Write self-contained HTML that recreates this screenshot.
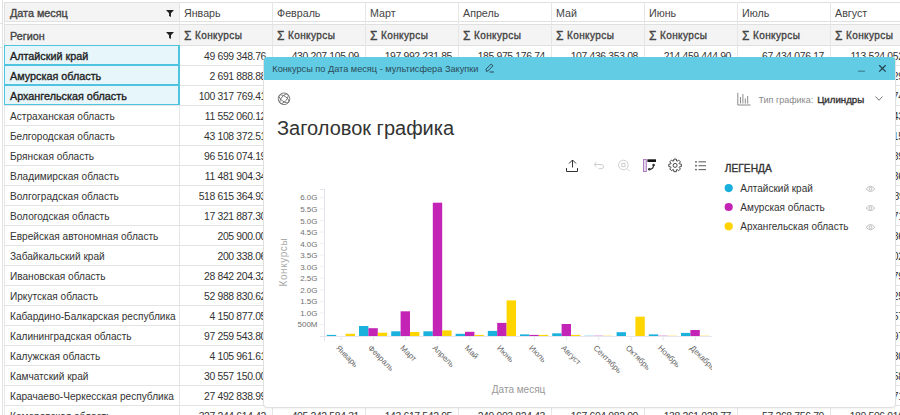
<!DOCTYPE html>
<html><head><meta charset="utf-8">
<style>
*{box-sizing:border-box;margin:0;padding:0}
html,body{width:900px;height:415px;overflow:hidden;background:#fff;position:relative;font-family:"Liberation Sans",sans-serif;font-size:10px;color:#333}
.abs{position:absolute}
.hdr{position:absolute;border:1px solid #e0e0e0;background:#fff}
.hdr.gray{background:#f4f4f4}
.hdr.nb{border-left:none;border-right:none}
.hdr.nb span{left:6px;font-size:10.7px}
.hdr.nb span.b{font-size:10px}
.hdr span{position:absolute;top:3px;white-space:nowrap;color:#444}
.b{font-weight:normal;font-size:10.8px;-webkit-text-stroke:0.35px currentColor}
.sig{font-weight:normal;font-size:12px;position:relative;top:0.5px}
.flt{position:absolute;left:161px;top:7px;width:8px;height:7px;background:#222;clip-path:polygon(0 0,100% 0,62% 45%,62% 100%,38% 85%,38% 45%)}
.row{position:absolute;left:4px;width:900px;height:20px;border-bottom:1px solid #e3e3e3}
.txt,.num{position:absolute;white-space:nowrap;color:#333;font-size:10.1px}
.num{letter-spacing:-0.35px;font-size:10.4px}
.vl{top:2px;width:1px;height:415px;background:#e6e6e6}
.sel{position:absolute;left:4px;width:176px;border:1px solid #4fc3df;border-right-width:2px;background:#e7f6fb}
.sel span{position:absolute;white-space:nowrap;color:#222}
/* modal */
.modal{position:absolute;left:263px;top:57px;width:633px;height:351px;background:#fff;border:1px solid #e0e0e0;border-radius:4px;box-shadow:0 1px 2px rgba(0,0,0,.05)}
.tbar{position:absolute;left:264px;top:57px;width:631px;height:23px;background:#62cce4;border-radius:3px 3px 0 0}
</style></head><body>
<div class="abs" style="left:2px;top:0;width:1px;height:415px;background:#e2e2e2"></div>
<div class="abs" style="left:4px;top:2px;width:1px;height:415px;background:#e8e8e8"></div>
<div class="abs" style="left:0;top:23px;width:3px;height:1px;background:#e2e2e2"></div>
<div class="abs" style="left:0;top:47px;width:3px;height:1px;background:#e2e2e2"></div>
<div class="hdr gray" style="left:4px;top:2px;width:176px;height:20px"><span class="b" style="left:5px;top:4px">Дата месяц</span><i class="flt"></i></div>
<div class="hdr gray" style="left:4px;top:24px;width:176px;height:22px"><span class="b" style="left:5px;top:5px">Регион</span><i class="flt" style="top:7px"></i></div>
<div class="hdr nb" style="left:179.00px;top:2px;width:93.00px;height:20px"><span style="left:5px;top:4px">Январь</span></div>
<div class="hdr gray nb" style="left:179.00px;top:24px;width:93.00px;height:22px"><span class="b" style="left:5px;top:3px;letter-spacing:0.4px"><b class="sig">&Sigma;</b> Конкурсы</span></div>
<div class="hdr nb" style="left:272.00px;top:2px;width:93.00px;height:20px"><span style="left:5px;top:4px">Февраль</span></div>
<div class="hdr gray nb" style="left:272.00px;top:24px;width:93.00px;height:22px"><span class="b" style="left:5px;top:3px;letter-spacing:0.4px"><b class="sig">&Sigma;</b> Конкурсы</span></div>
<div class="hdr nb" style="left:365.00px;top:2px;width:93.00px;height:20px"><span style="left:5px;top:4px">Март</span></div>
<div class="hdr gray nb" style="left:365.00px;top:24px;width:93.00px;height:22px"><span class="b" style="left:5px;top:3px;letter-spacing:0.4px"><b class="sig">&Sigma;</b> Конкурсы</span></div>
<div class="hdr nb" style="left:458.00px;top:2px;width:93.00px;height:20px"><span style="left:5px;top:4px">Апрель</span></div>
<div class="hdr gray nb" style="left:458.00px;top:24px;width:93.00px;height:22px"><span class="b" style="left:5px;top:3px;letter-spacing:0.4px"><b class="sig">&Sigma;</b> Конкурсы</span></div>
<div class="hdr nb" style="left:551.00px;top:2px;width:93.00px;height:20px"><span style="left:5px;top:4px">Май</span></div>
<div class="hdr gray nb" style="left:551.00px;top:24px;width:93.00px;height:22px"><span class="b" style="left:5px;top:3px;letter-spacing:0.4px"><b class="sig">&Sigma;</b> Конкурсы</span></div>
<div class="hdr nb" style="left:644.00px;top:2px;width:93.00px;height:20px"><span style="left:5px;top:4px">Июнь</span></div>
<div class="hdr gray nb" style="left:644.00px;top:24px;width:93.00px;height:22px"><span class="b" style="left:5px;top:3px;letter-spacing:0.4px"><b class="sig">&Sigma;</b> Конкурсы</span></div>
<div class="hdr nb" style="left:737.00px;top:2px;width:93.00px;height:20px"><span style="left:5px;top:4px">Июль</span></div>
<div class="hdr gray nb" style="left:737.00px;top:24px;width:93.00px;height:22px"><span class="b" style="left:5px;top:3px;letter-spacing:0.4px"><b class="sig">&Sigma;</b> Конкурсы</span></div>
<div class="hdr nb" style="left:830.00px;top:2px;width:93.00px;height:20px"><span style="left:5px;top:4px">Август</span></div>
<div class="hdr gray nb" style="left:830.00px;top:24px;width:93.00px;height:22px"><span class="b" style="left:5px;top:3px;letter-spacing:0.4px"><b class="sig">&Sigma;</b> Конкурсы</span></div>
<div class="hdr nb" style="left:923.00px;top:2px;width:93.00px;height:20px"><span style="left:5px;top:4px">Сентябрь</span></div>
<div class="hdr gray nb" style="left:923.00px;top:24px;width:93.00px;height:22px"><span class="b" style="left:5px;top:3px;letter-spacing:0.4px"><b class="sig">&Sigma;</b> Конкурсы</span></div>
<div class="row" style="top:46px"></div>
<span class="txt" style="left:10px;top:51px">Алтайский край</span>
<span class="num" style="right:634.00px;top:51px">49 699 348.76</span>
<span class="num" style="right:541.00px;top:51px">430 207 105.09</span>
<span class="num" style="right:448.00px;top:51px">197 992 231.85</span>
<span class="num" style="right:355.00px;top:51px">185 975 176.74</span>
<span class="num" style="right:262.00px;top:51px">107 436 353.08</span>
<span class="num" style="right:169.00px;top:51px">214 459 444.90</span>
<span class="num" style="right:76.00px;top:51px">67 434 076.17</span>
<span class="num" style="right:-17.00px;top:51px">113 524 052.37</span>
<span class="num" style="right:-110.00px;top:51px">96 210 438.15</span>
<div class="row" style="top:66px"></div>
<span class="txt" style="left:10px;top:71px">Амурская область</span>
<span class="num" style="right:634.00px;top:71px">2 691 888.88</span>
<span class="num" style="right:541.00px;top:71px">72 151 423.50</span>
<span class="num" style="right:448.00px;top:71px">163 724 538.36</span>
<span class="num" style="right:355.00px;top:71px">111 616 594.80</span>
<span class="num" style="right:262.00px;top:71px">181 572 091.54</span>
<span class="num" style="right:169.00px;top:71px">188 090 370.93</span>
<span class="num" style="right:76.00px;top:71px">20 593 128.91</span>
<span class="num" style="right:-17.00px;top:71px">4 937 229.47</span>
<span class="num" style="right:-110.00px;top:71px">251 403 255.55</span>
<div class="row" style="top:86px"></div>
<span class="txt" style="left:10px;top:91px">Архангельская область</span>
<span class="num" style="right:634.00px;top:91px">100 317 769.41</span>
<span class="num" style="right:541.00px;top:91px">78 546 850.28</span>
<span class="num" style="right:448.00px;top:91px">71 064 957.35</span>
<span class="num" style="right:355.00px;top:91px">298 697 805.82</span>
<span class="num" style="right:262.00px;top:91px">141 608 788.75</span>
<span class="num" style="right:169.00px;top:91px">251 101 973.93</span>
<span class="num" style="right:76.00px;top:91px">143 429 609.40</span>
<span class="num" style="right:-17.00px;top:91px">192 081 374.02</span>
<span class="num" style="right:-110.00px;top:91px">46 034 310.78</span>
<div class="row" style="top:106px"></div>
<span class="txt" style="left:10px;top:111px">Астраханская область</span>
<span class="num" style="right:634.00px;top:111px">11 552 060.12</span>
<span class="num" style="right:541.00px;top:111px">190 823 336.83</span>
<span class="num" style="right:448.00px;top:111px">260 545 546.84</span>
<span class="num" style="right:355.00px;top:111px">157 431 181.90</span>
<span class="num" style="right:262.00px;top:111px">222 634 305.00</span>
<span class="num" style="right:169.00px;top:111px">201 752 031.14</span>
<span class="num" style="right:76.00px;top:111px">20 145 400.03</span>
<span class="num" style="right:-17.00px;top:111px">227 710 843.64</span>
<span class="num" style="right:-110.00px;top:111px">177 738 775.30</span>
<div class="row" style="top:126px"></div>
<span class="txt" style="left:10px;top:131px">Белгородская область</span>
<span class="num" style="right:634.00px;top:131px">43 108 372.51</span>
<span class="num" style="right:541.00px;top:131px">91 079 030.20</span>
<span class="num" style="right:448.00px;top:131px">10 272 513.69</span>
<span class="num" style="right:355.00px;top:131px">259 792 643.86</span>
<span class="num" style="right:262.00px;top:131px">142 351 977.51</span>
<span class="num" style="right:169.00px;top:131px">215 928 353.30</span>
<span class="num" style="right:76.00px;top:131px">263 765 027.28</span>
<span class="num" style="right:-17.00px;top:131px">214 524 715.60</span>
<span class="num" style="right:-110.00px;top:131px">276 408 501.61</span>
<div class="row" style="top:146px"></div>
<span class="txt" style="left:10px;top:151px">Брянская область</span>
<span class="num" style="right:634.00px;top:151px">96 516 074.19</span>
<span class="num" style="right:541.00px;top:151px">119 094 057.80</span>
<span class="num" style="right:448.00px;top:151px">240 471 722.52</span>
<span class="num" style="right:355.00px;top:151px">133 941 695.76</span>
<span class="num" style="right:262.00px;top:151px">280 740 429.79</span>
<span class="num" style="right:169.00px;top:151px">263 781 131.44</span>
<span class="num" style="right:76.00px;top:151px">30 138 838.61</span>
<span class="num" style="right:-17.00px;top:151px">41 654 689.20</span>
<span class="num" style="right:-110.00px;top:151px">65 879 095.43</span>
<div class="row" style="top:166px"></div>
<span class="txt" style="left:10px;top:171px">Владимирская область</span>
<span class="num" style="right:634.00px;top:171px">11 481 904.34</span>
<span class="num" style="right:541.00px;top:171px">289 678 561.53</span>
<span class="num" style="right:448.00px;top:171px">131 412 398.12</span>
<span class="num" style="right:355.00px;top:171px">188 367 838.97</span>
<span class="num" style="right:262.00px;top:171px">91 006 833.33</span>
<span class="num" style="right:169.00px;top:171px">152 665 652.16</span>
<span class="num" style="right:76.00px;top:171px">116 374 011.39</span>
<span class="num" style="right:-17.00px;top:171px">105 922 236.14</span>
<span class="num" style="right:-110.00px;top:171px">175 937 158.11</span>
<div class="row" style="top:186px"></div>
<span class="txt" style="left:10px;top:191px">Волгоградская область</span>
<span class="num" style="right:634.00px;top:191px">518 615 364.93</span>
<span class="num" style="right:541.00px;top:191px">175 691 286.10</span>
<span class="num" style="right:448.00px;top:191px">271 356 329.48</span>
<span class="num" style="right:355.00px;top:191px">204 912 658.85</span>
<span class="num" style="right:262.00px;top:191px">278 754 734.76</span>
<span class="num" style="right:169.00px;top:191px">257 063 769.35</span>
<span class="num" style="right:76.00px;top:191px">297 305 903.82</span>
<span class="num" style="right:-17.00px;top:191px">201 710 789.11</span>
<span class="num" style="right:-110.00px;top:191px">49 766 786.97</span>
<div class="row" style="top:206px"></div>
<span class="txt" style="left:10px;top:211px">Вологодская область</span>
<span class="num" style="right:634.00px;top:211px">17 321 887.30</span>
<span class="num" style="right:541.00px;top:211px">258 330 622.40</span>
<span class="num" style="right:448.00px;top:211px">289 425 251.25</span>
<span class="num" style="right:355.00px;top:211px">271 504 099.37</span>
<span class="num" style="right:262.00px;top:211px">171 163 143.54</span>
<span class="num" style="right:169.00px;top:211px">214 431 289.03</span>
<span class="num" style="right:76.00px;top:211px">64 126 370.12</span>
<span class="num" style="right:-17.00px;top:211px">249 650 771.15</span>
<span class="num" style="right:-110.00px;top:211px">172 486 173.35</span>
<div class="row" style="top:226px"></div>
<span class="txt" style="left:10px;top:231px">Еврейская автономная область</span>
<span class="num" style="right:634.00px;top:231px">205 900.00</span>
<span class="num" style="right:541.00px;top:231px">86 202 281.13</span>
<span class="num" style="right:448.00px;top:231px">19 974 712.57</span>
<span class="num" style="right:355.00px;top:231px">256 328 804.04</span>
<span class="num" style="right:262.00px;top:231px">296 951 998.46</span>
<span class="num" style="right:169.00px;top:231px">27 466 909.84</span>
<span class="num" style="right:76.00px;top:231px">240 378 001.06</span>
<span class="num" style="right:-17.00px;top:231px">123 728 086.38</span>
<span class="num" style="right:-110.00px;top:231px">46 078 846.96</span>
<div class="row" style="top:246px"></div>
<span class="txt" style="left:10px;top:251px">Забайкальский край</span>
<span class="num" style="right:634.00px;top:251px">200 338.06</span>
<span class="num" style="right:541.00px;top:251px">88 873 482.80</span>
<span class="num" style="right:448.00px;top:251px">230 868 774.30</span>
<span class="num" style="right:355.00px;top:251px">261 957 340.36</span>
<span class="num" style="right:262.00px;top:251px">14 212 828.28</span>
<span class="num" style="right:169.00px;top:251px">184 745 226.03</span>
<span class="num" style="right:76.00px;top:251px">14 437 132.81</span>
<span class="num" style="right:-17.00px;top:251px">215 813 702.76</span>
<span class="num" style="right:-110.00px;top:251px">99 955 289.66</span>
<div class="row" style="top:266px"></div>
<span class="txt" style="left:10px;top:271px">Ивановская область</span>
<span class="num" style="right:634.00px;top:271px">28 842 204.32</span>
<span class="num" style="right:541.00px;top:271px">264 390 686.87</span>
<span class="num" style="right:448.00px;top:271px">294 210 091.30</span>
<span class="num" style="right:355.00px;top:271px">152 120 691.72</span>
<span class="num" style="right:262.00px;top:271px">299 554 174.67</span>
<span class="num" style="right:169.00px;top:271px">93 591 345.99</span>
<span class="num" style="right:76.00px;top:271px">24 014 240.71</span>
<span class="num" style="right:-17.00px;top:271px">180 329 079.83</span>
<span class="num" style="right:-110.00px;top:271px">10 381 950.89</span>
<div class="row" style="top:286px"></div>
<span class="txt" style="left:10px;top:291px">Иркутская область</span>
<span class="num" style="right:634.00px;top:291px">52 988 830.62</span>
<span class="num" style="right:541.00px;top:291px">60 018 072.07</span>
<span class="num" style="right:448.00px;top:291px">122 972 904.55</span>
<span class="num" style="right:355.00px;top:291px">183 529 669.77</span>
<span class="num" style="right:262.00px;top:291px">47 703 498.31</span>
<span class="num" style="right:169.00px;top:291px">13 688 311.59</span>
<span class="num" style="right:76.00px;top:291px">260 465 931.14</span>
<span class="num" style="right:-17.00px;top:291px">94 835 325.45</span>
<span class="num" style="right:-110.00px;top:291px">287 639 168.50</span>
<div class="row" style="top:306px"></div>
<span class="txt" style="left:10px;top:311px">Кабардино-Балкарская республика</span>
<span class="num" style="right:634.00px;top:311px">4 150 877.05</span>
<span class="num" style="right:541.00px;top:311px">269 101 232.79</span>
<span class="num" style="right:448.00px;top:311px">113 958 982.58</span>
<span class="num" style="right:355.00px;top:311px">138 662 480.22</span>
<span class="num" style="right:262.00px;top:311px">156 501 822.39</span>
<span class="num" style="right:169.00px;top:311px">193 522 726.80</span>
<span class="num" style="right:76.00px;top:311px">179 099 421.28</span>
<span class="num" style="right:-17.00px;top:311px">168 219 057.54</span>
<span class="num" style="right:-110.00px;top:311px">186 417 714.50</span>
<div class="row" style="top:326px"></div>
<span class="txt" style="left:10px;top:331px">Калининградская область</span>
<span class="num" style="right:634.00px;top:331px">97 259 543.80</span>
<span class="num" style="right:541.00px;top:331px">282 245 755.37</span>
<span class="num" style="right:448.00px;top:331px">152 601 017.97</span>
<span class="num" style="right:355.00px;top:331px">129 926 274.48</span>
<span class="num" style="right:262.00px;top:331px">216 373 064.39</span>
<span class="num" style="right:169.00px;top:331px">72 053 050.22</span>
<span class="num" style="right:76.00px;top:331px">91 024 971.49</span>
<span class="num" style="right:-17.00px;top:331px">293 361 397.62</span>
<span class="num" style="right:-110.00px;top:331px">156 817 060.69</span>
<div class="row" style="top:346px"></div>
<span class="txt" style="left:10px;top:351px">Калужская область</span>
<span class="num" style="right:634.00px;top:351px">4 105 961.61</span>
<span class="num" style="right:541.00px;top:351px">164 980 709.84</span>
<span class="num" style="right:448.00px;top:351px">4 425 788.42</span>
<span class="num" style="right:355.00px;top:351px">125 147 892.80</span>
<span class="num" style="right:262.00px;top:351px">174 409 598.93</span>
<span class="num" style="right:169.00px;top:351px">6 995 814.20</span>
<span class="num" style="right:76.00px;top:351px">185 123 584.45</span>
<span class="num" style="right:-17.00px;top:351px">190 021 980.05</span>
<span class="num" style="right:-110.00px;top:351px">18 964 072.68</span>
<div class="row" style="top:366px"></div>
<span class="txt" style="left:10px;top:371px">Камчатский край</span>
<span class="num" style="right:634.00px;top:371px">30 557 150.00</span>
<span class="num" style="right:541.00px;top:371px">188 574 991.59</span>
<span class="num" style="right:448.00px;top:371px">140 408 878.48</span>
<span class="num" style="right:355.00px;top:371px">204 105 138.01</span>
<span class="num" style="right:262.00px;top:371px">106 420 517.93</span>
<span class="num" style="right:169.00px;top:371px">212 378 124.56</span>
<span class="num" style="right:76.00px;top:371px">221 672 252.49</span>
<span class="num" style="right:-17.00px;top:371px">7 632 558.23</span>
<span class="num" style="right:-110.00px;top:371px">19 112 464.29</span>
<div class="row" style="top:386px"></div>
<span class="txt" style="left:10px;top:391px">Карачаево-Черкесская республика</span>
<span class="num" style="right:634.00px;top:391px">27 492 838.99</span>
<span class="num" style="right:541.00px;top:391px">203 130 072.54</span>
<span class="num" style="right:448.00px;top:391px">289 028 368.54</span>
<span class="num" style="right:355.00px;top:391px">76 085 561.18</span>
<span class="num" style="right:262.00px;top:391px">137 437 326.76</span>
<span class="num" style="right:169.00px;top:391px">178 208 890.82</span>
<span class="num" style="right:76.00px;top:391px">96 687 590.34</span>
<span class="num" style="right:-17.00px;top:391px">109 822 571.71</span>
<span class="num" style="right:-110.00px;top:391px">94 488 527.70</span>
<div class="row" style="top:406px"></div>
<span class="txt" style="left:10px;top:411px">Кемеровская область</span>
<span class="num" style="right:634.00px;top:411px">327 244 614.42</span>
<span class="num" style="right:541.00px;top:411px">405 242 584.31</span>
<span class="num" style="right:448.00px;top:411px">143 617 542.95</span>
<span class="num" style="right:355.00px;top:411px">249 903 824.43</span>
<span class="num" style="right:262.00px;top:411px">167 604 082.00</span>
<span class="num" style="right:169.00px;top:411px">138 261 028.77</span>
<span class="num" style="right:76.00px;top:411px">57 268 756.70</span>
<span class="num" style="right:-17.00px;top:411px">180 506 016.52</span>
<span class="num" style="right:-110.00px;top:411px">90 418 331.20</span>
<div class="abs vl" style="left:179.00px"></div>
<div class="abs vl" style="left:272.00px"></div>
<div class="abs vl" style="left:365.00px"></div>
<div class="abs vl" style="left:458.00px"></div>
<div class="abs vl" style="left:551.00px"></div>
<div class="abs vl" style="left:644.00px"></div>
<div class="abs vl" style="left:737.00px"></div>
<div class="abs vl" style="left:830.00px"></div>
<div class="abs vl" style="left:923.00px"></div>
<div class="abs vl" style="left:1016.00px"></div>
<div class="sel" style="top:45px;height:20px"><span class="b" style="left:5px;top:4px">Алтайский край</span></div>
<div class="sel" style="top:65px;height:20px"><span class="b" style="left:5px;top:4px">Амурская область</span></div>
<div class="sel" style="top:85px;height:20px"><span class="b" style="left:5px;top:4px">Архангельская область</span></div>
<div class="modal"></div>
<div class="tbar"></div>
<svg class="abs" style="left:0;top:0" width="900" height="415" viewBox="0 0 900 415" font-family="Liberation Sans, sans-serif">
<!-- title bar -->
<text x="272.3" y="72.4" font-size="9.2" fill="#2b4a57">Конкурсы по Дата месяц - мультисфера Закупки</text>
<g fill="none" stroke="#2b4a57" stroke-width="1">
<path d="M486.5,71.5 L486,69.2 L491.2,64 L493,65.8 L487.8,71 Z"/>
<line x1="489.5" y1="72" x2="494" y2="72"/>
</g>
<line x1="858" y1="71.2" x2="865" y2="71.2" stroke="#3f8496" stroke-width="1.2"/>
<g stroke="#24414c" stroke-width="1.25"><line x1="879.2" y1="65.2" x2="885.6" y2="71.6"/><line x1="885.6" y1="65.2" x2="879.2" y2="71.6"/></g>
<!-- globe -->
<g fill="none" stroke="#707070" stroke-width="0.9">
<circle cx="284" cy="98.8" r="5.8"/>
<ellipse cx="284" cy="98.8" rx="5.8" ry="2.6" transform="rotate(-50 284 98.8)"/>
<ellipse cx="284" cy="98.8" rx="5.8" ry="2.6" transform="rotate(35 284 98.8)"/>
</g>
<text x="277" y="135" font-size="20" fill="#333">Заголовок графика</text>
<!-- chart type -->
<g fill="none" stroke="#8a8a8a" stroke-width="1">
<path d="M737.8,92.8 V105 H750.5"/>
<line x1="740.5" y1="97" x2="740.5" y2="103.5"/><line x1="742.9" y1="94" x2="742.9" y2="103.5"/><line x1="745.3" y1="98.5" x2="745.3" y2="103.5"/><line x1="747.7" y1="96" x2="747.7" y2="103.5"/>
</g>
<text x="758.4" y="102.9" font-size="9" fill="#8a8a8a">Тип графика:</text>
<text x="817.2" y="102.9" font-size="9.4" fill="#333" stroke="#333" stroke-width="0.35" textLength="47" lengthAdjust="spacingAndGlyphs">Цилиндры</text>
<polyline points="875.5,96.5 879,100.3 882.5,96.5" fill="none" stroke="#777" stroke-width="1"/>
<!-- toolbar -->
<g fill="none" stroke="#333" stroke-width="1">
<line x1="572.5" y1="160" x2="572.5" y2="167.5"/><polyline points="569,163.5 572.5,160 576,163.5"/>
<polyline points="566.5,168 566.5,171.5 577.5,171.5 577.5,168"/>
</g>
<g fill="none" stroke="#cfcfcf" stroke-width="1">
<path d="M594,164.5 H601 A2.7,2.1 0 0 1 601,168.7 H598.5"/><polyline points="596.6,162 594,164.5 596.6,167"/>
<circle cx="623.4" cy="165" r="4.8"/><rect x="621.8" y="163.4" width="3.2" height="3.2"/><line x1="626.8" y1="168.4" x2="629.6" y2="171.2"/>
</g>
<rect x="643.5" y="159.5" width="2.8" height="12" fill="#eadcf0" stroke="#b07cc0" stroke-width="1"/>
<rect x="647.4" y="159.3" width="8.6" height="2.7" fill="#151515"/>
<path d="M649.3,169.3 Q653.6,169.3 653.6,165" fill="none" stroke="#333" stroke-width="1.2"/>
<circle cx="649.3" cy="169.3" r="1.3" fill="#333"/><circle cx="653.6" cy="165" r="1.3" fill="#333"/>
<g fill="none" stroke="#444" stroke-width="1">
<path id="gear" stroke-linejoin="round" d="M673.64,161.04 L673.88,159.12 L676.32,159.12 L676.56,161.04 L677.15,161.28 L678.68,160.09 L680.41,161.82 L679.22,163.35 L679.46,163.94 L681.38,164.18 L681.38,166.62 L679.46,166.86 L679.22,167.45 L680.41,168.98 L678.68,170.71 L677.15,169.52 L676.56,169.76 L676.32,171.68 L673.88,171.68 L673.64,169.76 L673.05,169.52 L671.52,170.71 L669.79,168.98 L670.98,167.45 L670.74,166.86 L668.82,166.62 L668.82,164.18 L670.74,163.94 L670.98,163.35 L669.79,161.82 L671.52,160.09 L673.05,161.28 Z"/>
<circle cx="675.1" cy="165.4" r="2"/>
</g>
<g stroke="#666" stroke-width="1.1"><line x1="698.5" y1="161.8" x2="706" y2="161.8"/><line x1="698.5" y1="165.7" x2="706" y2="165.7"/><line x1="698.5" y1="169.6" x2="706" y2="169.6"/></g>
<g fill="#555"><circle cx="696" cy="161.8" r="0.9"/><circle cx="696" cy="165.7" r="0.9"/><circle cx="696" cy="169.6" r="0.9"/></g>
<!-- legend -->
<text x="724.8" y="172.3" font-size="10.4" fill="#333" stroke="#333" stroke-width="0.35" textLength="47" lengthAdjust="spacingAndGlyphs">ЛЕГЕНДА</text>
<circle cx="728.7" cy="188.1" r="4.1" fill="#1ab0dc"/>
<circle cx="728.7" cy="207" r="4.1" fill="#c424b5"/>
<circle cx="728.7" cy="226.3" r="4.1" fill="#ffd200"/>
<text x="740.3" y="192" font-size="10" fill="#333">Алтайский край</text>
<text x="740.3" y="210.9" font-size="10" fill="#333">Амурская область</text>
<text x="740.3" y="230" font-size="10" fill="#333">Архангельская область</text>
<g fill="none" stroke="#b8b8b8" stroke-width="0.9">
<path d="M866.2,188.9 Q870.5,183.70000000000002 874.8,188.9 Q870.5,194.1 866.2,188.9 Z"/><circle cx="870.5" cy="188.9" r="1.4"/>
<path d="M866.2,208.1 Q870.5,202.9 874.8,208.1 Q870.5,213.29999999999998 866.2,208.1 Z"/><circle cx="870.5" cy="208.1" r="1.4"/>
<path d="M866.2,227.2 Q870.5,222.0 874.8,227.2 Q870.5,232.39999999999998 866.2,227.2 Z"/><circle cx="870.5" cy="227.2" r="1.4"/>
</g>
<!-- chart -->
<defs><clipPath id="xc"><rect x="300" y="330" width="412" height="60"/></clipPath></defs>
<line x1="324.5" y1="189.5" x2="324.5" y2="341" stroke="#e3e3ec" stroke-width="1"/>
<line x1="320" y1="189.5" x2="325" y2="189.5" stroke="#e3e3ec" stroke-width="1"/>
<line x1="320" y1="324.4" x2="324" y2="324.4" stroke="#f0f0f0" stroke-width="1"/>
<text x="317.5" y="327.4" text-anchor="end" font-size="8" fill="#707070">500M</text>
<line x1="320" y1="312.9" x2="324" y2="312.9" stroke="#f0f0f0" stroke-width="1"/>
<text x="317.5" y="315.9" text-anchor="end" font-size="8" fill="#707070">1.0G</text>
<line x1="320" y1="301.4" x2="324" y2="301.4" stroke="#f0f0f0" stroke-width="1"/>
<text x="317.5" y="304.4" text-anchor="end" font-size="8" fill="#707070">1.5G</text>
<line x1="320" y1="289.8" x2="324" y2="289.8" stroke="#f0f0f0" stroke-width="1"/>
<text x="317.5" y="292.8" text-anchor="end" font-size="8" fill="#707070">2.0G</text>
<line x1="320" y1="278.2" x2="324" y2="278.2" stroke="#f0f0f0" stroke-width="1"/>
<text x="317.5" y="281.2" text-anchor="end" font-size="8" fill="#707070">2.5G</text>
<line x1="320" y1="266.7" x2="324" y2="266.7" stroke="#f0f0f0" stroke-width="1"/>
<text x="317.5" y="269.7" text-anchor="end" font-size="8" fill="#707070">3.0G</text>
<line x1="320" y1="255.1" x2="324" y2="255.1" stroke="#f0f0f0" stroke-width="1"/>
<text x="317.5" y="258.1" text-anchor="end" font-size="8" fill="#707070">3.5G</text>
<line x1="320" y1="243.6" x2="324" y2="243.6" stroke="#f0f0f0" stroke-width="1"/>
<text x="317.5" y="246.6" text-anchor="end" font-size="8" fill="#707070">4.0G</text>
<line x1="320" y1="232.1" x2="324" y2="232.1" stroke="#f0f0f0" stroke-width="1"/>
<text x="317.5" y="235.1" text-anchor="end" font-size="8" fill="#707070">4.5G</text>
<line x1="320" y1="220.5" x2="324" y2="220.5" stroke="#f0f0f0" stroke-width="1"/>
<text x="317.5" y="223.5" text-anchor="end" font-size="8" fill="#707070">5.0G</text>
<line x1="320" y1="208.9" x2="324" y2="208.9" stroke="#f0f0f0" stroke-width="1"/>
<text x="317.5" y="211.9" text-anchor="end" font-size="8" fill="#707070">5.5G</text>
<line x1="320" y1="197.4" x2="324" y2="197.4" stroke="#f0f0f0" stroke-width="1"/>
<text x="317.5" y="200.4" text-anchor="end" font-size="8" fill="#707070">6.0G</text>
<line x1="320" y1="336.5" x2="712" y2="336.5" stroke="#e6e6ee" stroke-width="1"/>
<line x1="341.2" y1="337" x2="341.2" y2="340.5" stroke="#e6e6ee" stroke-width="1"/>
<rect x="326.8" y="334.9" width="9.4" height="1.1" fill="#1ab1dc"/>
<rect x="345.6" y="333.8" width="9.4" height="2.2" fill="#ffd500"/>
<line x1="373.4" y1="337" x2="373.4" y2="340.5" stroke="#e6e6ee" stroke-width="1"/>
<rect x="359.0" y="326.0" width="9.4" height="10.0" fill="#1ab1dc"/>
<rect x="368.4" y="328.2" width="9.4" height="7.8" fill="#c424b6"/>
<rect x="377.8" y="332.7" width="9.4" height="3.3" fill="#ffd500"/>
<line x1="405.6" y1="337" x2="405.6" y2="340.5" stroke="#e6e6ee" stroke-width="1"/>
<rect x="391.2" y="331.3" width="9.4" height="4.7" fill="#1ab1dc"/>
<rect x="400.6" y="311.3" width="9.4" height="24.7" fill="#c424b6"/>
<rect x="410.0" y="332.0" width="9.4" height="4.0" fill="#ffd500"/>
<line x1="437.8" y1="337" x2="437.8" y2="340.5" stroke="#e6e6ee" stroke-width="1"/>
<rect x="423.4" y="331.3" width="9.4" height="4.7" fill="#1ab1dc"/>
<rect x="432.8" y="202.7" width="9.4" height="133.3" fill="#c424b6"/>
<rect x="442.2" y="330.4" width="9.4" height="5.6" fill="#ffd500"/>
<line x1="470.0" y1="337" x2="470.0" y2="340.5" stroke="#e6e6ee" stroke-width="1"/>
<rect x="455.6" y="333.8" width="9.4" height="2.2" fill="#1ab1dc"/>
<rect x="465.0" y="331.8" width="9.4" height="4.2" fill="#c424b6"/>
<rect x="474.4" y="334.9" width="9.4" height="1.1" fill="#ffd500"/>
<line x1="502.2" y1="337" x2="502.2" y2="340.5" stroke="#e6e6ee" stroke-width="1"/>
<rect x="487.8" y="330.9" width="9.4" height="5.1" fill="#1ab1dc"/>
<rect x="497.2" y="322.9" width="9.4" height="13.1" fill="#c424b6"/>
<rect x="506.6" y="300.4" width="9.4" height="35.6" fill="#ffd500"/>
<line x1="534.4" y1="337" x2="534.4" y2="340.5" stroke="#e6e6ee" stroke-width="1"/>
<rect x="520.0" y="334.4" width="9.4" height="1.6" fill="#1ab1dc"/>
<rect x="529.4" y="334.9" width="9.4" height="1.1" fill="#c424b6"/>
<rect x="538.8" y="334.9" width="9.4" height="1.1" fill="#ffd500"/>
<line x1="566.6" y1="337" x2="566.6" y2="340.5" stroke="#e6e6ee" stroke-width="1"/>
<rect x="552.2" y="333.3" width="9.4" height="2.7" fill="#1ab1dc"/>
<rect x="561.6" y="324.0" width="9.4" height="12.0" fill="#c424b6"/>
<rect x="571.0" y="334.9" width="9.4" height="1.1" fill="#ffd500"/>
<line x1="598.8" y1="337" x2="598.8" y2="340.5" stroke="#e6e6ee" stroke-width="1"/>
<rect x="584.4" y="335.3" width="9.4" height="0.7" fill="#1ab1dc" fill-opacity="0.35"/>
<rect x="593.8" y="335.3" width="9.4" height="0.7" fill="#c424b6" fill-opacity="0.35"/>
<rect x="603.2" y="335.3" width="9.4" height="0.7" fill="#ffd500" fill-opacity="0.35"/>
<line x1="631.0" y1="337" x2="631.0" y2="340.5" stroke="#e6e6ee" stroke-width="1"/>
<rect x="616.6" y="332.2" width="9.4" height="3.8" fill="#1ab1dc"/>
<rect x="635.4" y="316.7" width="9.4" height="19.3" fill="#ffd500"/>
<line x1="663.2" y1="337" x2="663.2" y2="340.5" stroke="#e6e6ee" stroke-width="1"/>
<rect x="648.8" y="334.4" width="9.4" height="1.6" fill="#1ab1dc"/>
<rect x="658.2" y="335.3" width="9.4" height="0.7" fill="#c424b6" fill-opacity="0.35"/>
<rect x="667.6" y="335.3" width="9.4" height="0.7" fill="#ffd500" fill-opacity="0.35"/>
<line x1="695.4" y1="337" x2="695.4" y2="340.5" stroke="#e6e6ee" stroke-width="1"/>
<rect x="681.0" y="332.9" width="9.4" height="3.1" fill="#1ab1dc"/>
<rect x="690.4" y="330.0" width="9.4" height="6.0" fill="#c424b6"/>
<rect x="699.8" y="335.3" width="9.4" height="0.7" fill="#ffd500" fill-opacity="0.35"/>
<g clip-path="url(#xc)"><text transform="translate(335.4,348.4) rotate(45)" font-size="8" fill="#666">Январь</text><text transform="translate(367.6,348.4) rotate(45)" font-size="8" fill="#666">Февраль</text><text transform="translate(399.8,348.4) rotate(45)" font-size="8" fill="#666">Март</text><text transform="translate(432.0,348.4) rotate(45)" font-size="8" fill="#666">Апрель</text><text transform="translate(464.2,348.4) rotate(45)" font-size="8" fill="#666">Май</text><text transform="translate(496.4,348.4) rotate(45)" font-size="8" fill="#666">Июнь</text><text transform="translate(528.6,348.4) rotate(45)" font-size="8" fill="#666">Июль</text><text transform="translate(560.8,348.4) rotate(45)" font-size="8" fill="#666">Август</text><text transform="translate(593.0,348.4) rotate(45)" font-size="8" fill="#666">Сентябрь</text><text transform="translate(625.2,348.4) rotate(45)" font-size="8" fill="#666">Октябрь</text><text transform="translate(657.4,348.4) rotate(45)" font-size="8" fill="#666">Ноябрь</text><text transform="translate(689.6,348.4) rotate(45)" font-size="8" fill="#666">Декабрь</text></g>
<text x="491.8" y="393" font-size="10" fill="#999">Дата месяц</text>
<text transform="translate(286.7,286.4) rotate(-90)" font-size="10" fill="#aaa" textLength="48" lengthAdjust="spacing">Конкурсы</text>

</svg>
</body></html>
